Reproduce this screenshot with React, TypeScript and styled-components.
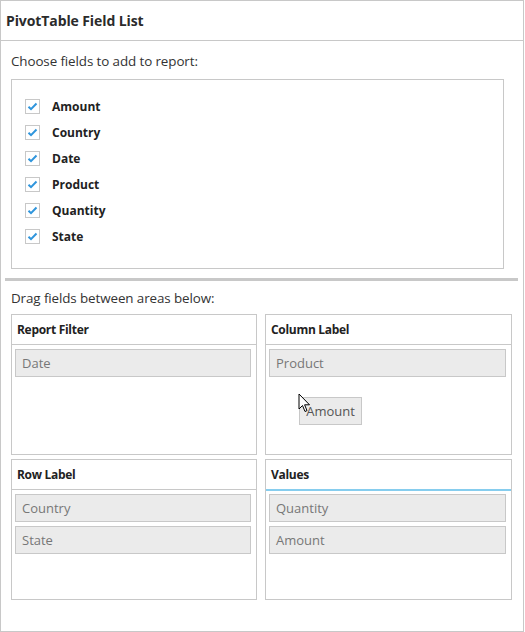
import { FC } from "react"
import styled, { createGlobalStyle } from "styled-components"

const GlobalStyle = createGlobalStyle`
  body {
    margin: 0;
    background: #fff;
    font-family: "Open Sans", "Noto Sans", sans-serif;
    color: #333;
  }
`

const Panel = styled.div`
  width: 524px;
  height: 632px;
  box-sizing: border-box;
  border: 1px solid #c8c8c8;
  position: relative;
`

const Header = styled.div`
  height: 40px;
  box-sizing: border-box;
  border-bottom: 1px solid #c8c8c8;
  display: flex;
  align-items: center;
  padding-left: 5px;
  font-size: 14px;
  font-weight: 700;
  letter-spacing: -0.1px;
  color: #2b2b2b;
`

const Caption = styled.div`
  font-size: 13.4px;
  padding-left: 10px;
  height: 18px;
  line-height: 18px;
  letter-spacing: -0.1px;
`

const TopSection = styled.div`
  padding-top: 11px;
`

const FieldBox = styled.div`
  margin: 9px 19px 0 10px;
  height: 190px;
  box-sizing: border-box;
  border: 1px solid #c8c8c8;
  padding: 13px 0 0 13px;
  display: flex;
  flex-direction: column;
`

const FieldRow = styled.label`
  display: flex;
  align-items: center;
  gap: 12px;
  height: 26px;
  font-size: 12px;
  font-weight: 700;
  color: #222;
`

const CheckBox = styled.span`
  width: 15px;
  height: 15px;
  box-sizing: border-box;
  border: 1px solid #c8c8c8;
  display: flex;
  align-items: center;
  justify-content: center;
`

const Divider = styled.div`
  margin: 9px 5px 0 4px;
  height: 3px;
  background: #c8c8c8;
`

const BottomSection = styled.div`
  padding-top: 8px;
`

const AreaGrid = styled.div`
  display: grid;
  grid-template-columns: 246px 247px;
  grid-template-rows: 141px 141px;
  column-gap: 8px;
  row-gap: 4px;
  margin: 7px 0 0 10px;
`

const Area = styled.div`
  border: 1px solid #c8c8c8;
  box-sizing: border-box;
  display: flex;
  flex-direction: column;
  position: relative;
`

const AreaHeader = styled.div<{ $active?: boolean }>`
  height: ${(p) => (p.$active ? 31 : 30)}px;
  box-sizing: border-box;
  border-bottom: ${(p) => (p.$active ? "2px solid #86cdee" : "1px solid #c8c8c8")};
  display: flex;
  align-items: center;
  padding-left: 5px;
  padding-bottom: ${(p) => (p.$active ? 0 : 1)}px;
  font-size: 12px;
  font-weight: 700;
  letter-spacing: -0.3px;
  color: #222;
`

const ItemList = styled.div<{ $active?: boolean }>`
  display: flex;
  flex-direction: column;
  gap: 4px;
  padding: ${(p) => (p.$active ? 3 : 4)}px 5px 0 3px;
`

const Item = styled.div`
  height: 28px;
  box-sizing: border-box;
  border: 1px solid #c8c8c8;
  background: #ebebeb;
  color: #777;
  font-size: 13px;
  display: flex;
  align-items: center;
  padding-left: 6px;
`

const Ghost = styled.div`
  position: absolute;
  left: 33px;
  top: 82px;
  width: 63px;
  height: 28px;
  box-sizing: border-box;
  border: 1px solid #c8c8c8;
  background: #ebebeb;
  color: #555;
  font-size: 13px;
  display: flex;
  align-items: center;
  justify-content: center;
`

const Cursor = styled.svg`
  position: absolute;
  left: 32px;
  top: 78px;
`

const CheckMark: FC = () => (
  <svg width="11" height="9" viewBox="0 0 11 9">
    <path d="M1.5 4.8 L4 7.2 L9.5 1.5" fill="none" stroke="#2f95dc" strokeWidth="2" />
  </svg>
)

const fields = ["Amount", "Country", "Date", "Product", "Quantity", "State"]

type AreaProps = { title: string; items: string[]; active?: boolean; dragging?: boolean }

const AreaBox: FC<AreaProps> = ({ title, items, active, dragging }) => (
  <Area>
    <AreaHeader $active={active}>{title}</AreaHeader>
    <ItemList $active={active}>
      {items.map((it) => (
        <Item key={it}>{it}</Item>
      ))}
    </ItemList>
    {dragging && (
      <>
        <Ghost>Amount</Ghost>
        <Cursor width="13" height="20" viewBox="0 0 13 20">
          <path d="M1 1 L1 16 L4.5 12.5 L7 18.5 L9 17.6 L6.6 11.8 L11.5 11.8 Z" fill="#fff" stroke="#000" strokeWidth="1" strokeLinejoin="miter" />
        </Cursor>
      </>
    )}
  </Area>
)

export default function App() {
  return (
    <>
      <GlobalStyle />
      <Panel>
        <Header>PivotTable Field List</Header>
        <TopSection>
          <Caption>Choose fields to add to report:</Caption>
          <FieldBox>
            {fields.map((f) => (
              <FieldRow key={f}>
                <CheckBox>
                  <CheckMark />
                </CheckBox>
                {f}
              </FieldRow>
            ))}
          </FieldBox>
        </TopSection>
        <Divider />
        <BottomSection>
          <Caption>Drag fields between areas below:</Caption>
          <AreaGrid>
            <AreaBox title="Report Filter" items={["Date"]} />
            <AreaBox title="Column Label" items={["Product"]} dragging />
            <AreaBox title="Row Label" items={["Country", "State"]} />
            <AreaBox title="Values" items={["Quantity", "Amount"]} active />
          </AreaGrid>
        </BottomSection>
      </Panel>
    </>
  )
}
